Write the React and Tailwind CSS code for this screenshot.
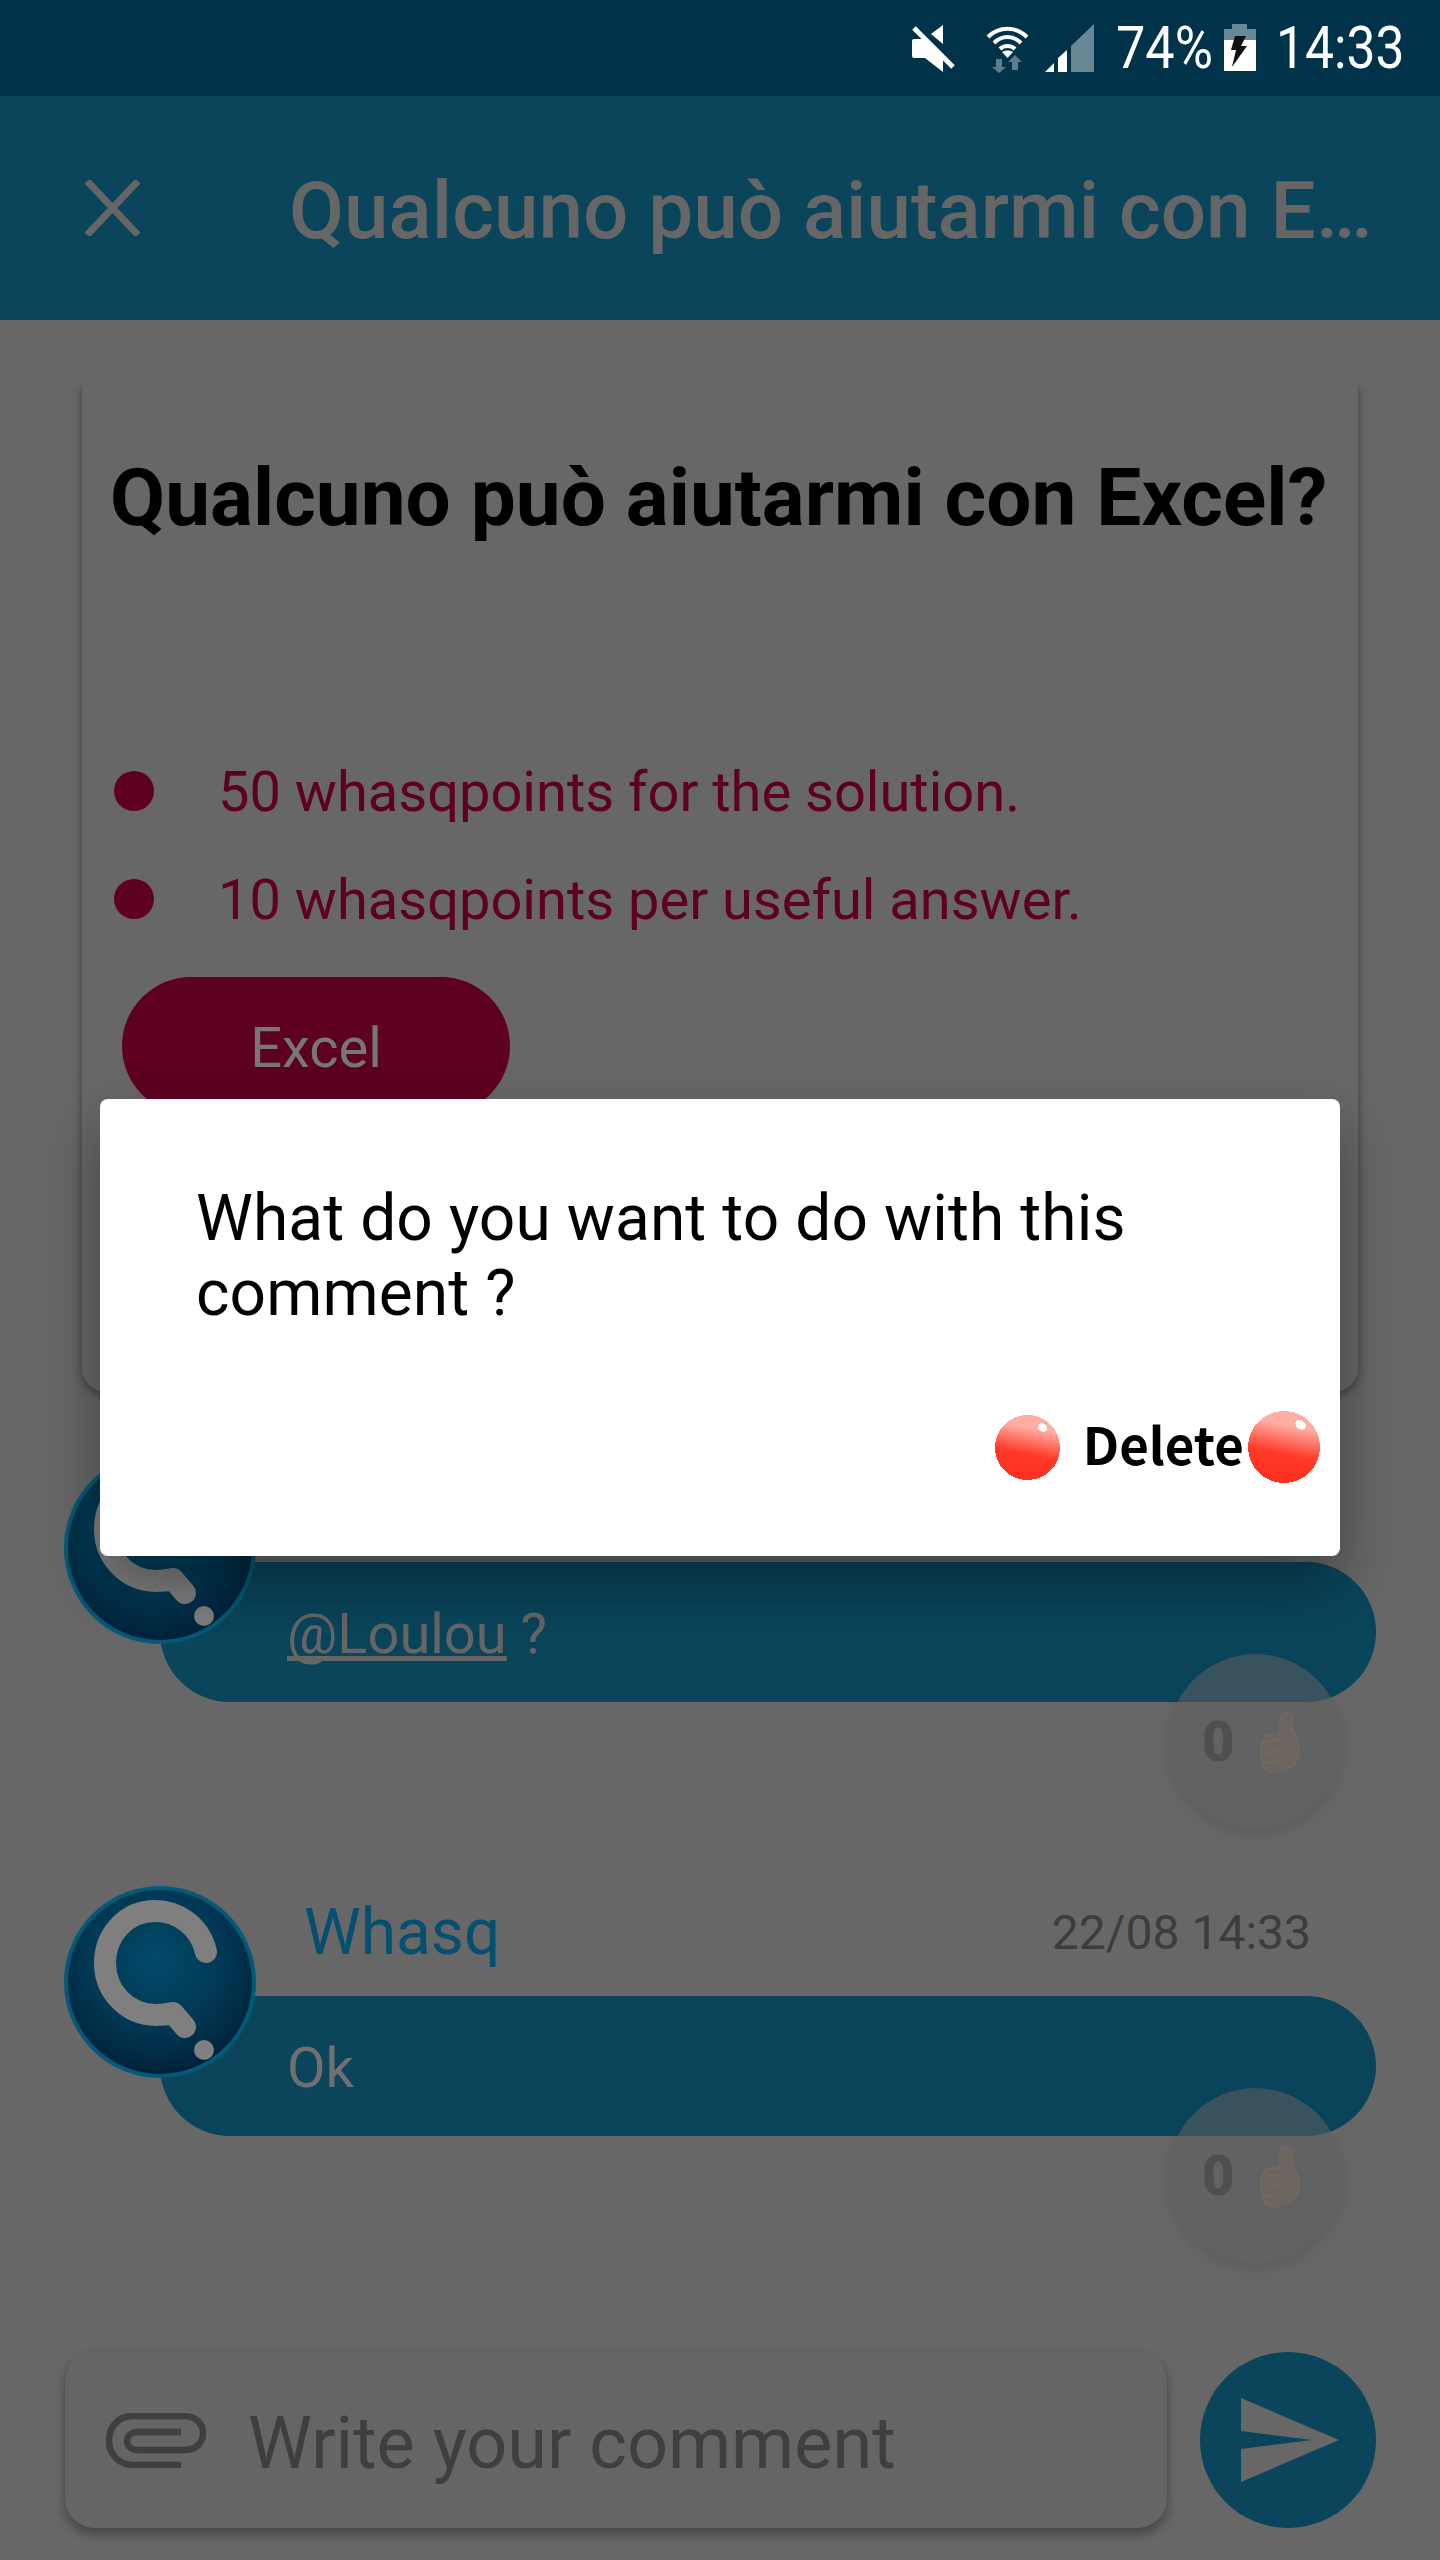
import { useId } from 'react'

function MuteIcon() {
  return (
    <svg width="43" height="47" viewBox="0 0 43 47" className="shrink-0">
      <path d="M19 9 31 0V19Z" fill="#fff" />
      <path d="M2 14H11L31 32V47L13 33H2Q0 33 0 31V16Q0 14 2 14Z" fill="#fff" />
      <path d="M2 3 41 42" stroke="#fff" strokeWidth="5" />
    </svg>
  )
}

function WifiIcon() {
  return (
    <svg width="43" height="49" viewBox="0 0 43 49" className="shrink-0">
      <g fill="none" stroke="#fff" strokeWidth="4">
        <path d="M2 13C13 2 30 2 41 13" />
        <path d="M8 19C16 11 27 11 35 19" />
        <path d="M14 25C18 21 25 21 29 25" />
      </g>
      <path d="M16 28C19 26 24 26 27 28L21.5 34Z" fill="#fff" />
      <path d="M10 35H16V43H20L13 49 6 43H10Z" fill="#5e7d8c" />
      <path d="M26 46H32V38H36L29 31 22 38H26Z" fill="#5e7d8c" />
    </svg>
  )
}

function SignalIcon() {
  return (
    <svg width="49" height="48" viewBox="0 0 49 48" className="shrink-0">
      <path d="M0 48 9 39V48Z" fill="#fff" />
      <path d="M13 48V34L22 26V48Z" fill="#fff" />
      <path d="M26 48V22L49 0V48Z" fill="#688896" />
    </svg>
  )
}

function BatteryIcon() {
  return (
    <svg width="32" height="48" viewBox="0 0 32 48" className="shrink-0">
      <path d="M8 0H23V5H32V16H0V5H8Z" fill="#688896" />
      <path d="M0 16H32V47H0Z" fill="#fff" />
      <path d="M11 12H22L17 22H23L8 43 12 26H7Z" fill="#111" />
    </svg>
  )
}

function StatusBar() {
  return (
    <div className="flex h-24 shrink-0 items-center justify-end bg-[#003349] pr-[38px] text-white">
      <MuteIcon />
      <div className="ml-[31px]"><WifiIcon /></div>
      <div className="ml-4"><SignalIcon /></div>
      <span className="ml-[22px] w-[94px] origin-left scale-x-[0.87] text-[60px] leading-none whitespace-nowrap">74%</span>
      <div className="ml-[14px]"><BatteryIcon /></div>
      <span className="ml-5 w-[126px] origin-left scale-x-[0.86] text-[60px] leading-none whitespace-nowrap">14:33</span>
    </div>
  )
}

function Ball({ size }) {
  const id = useId()
  return (
    <svg width={size} height={size} viewBox="0 0 65 65" shapeRendering="crispEdges" className="shrink-0">
      <defs>
        <linearGradient id={id} x1="0.62" y1="0" x2="0.42" y2="1">
          <stop offset="0.2" stopColor="#ffaea3" />
          <stop offset="0.6" stopColor="#ff3a28" />
          <stop offset="1" stopColor="#ff2f1e" />
        </linearGradient>
      </defs>
      <circle cx="32.5" cy="32.5" r="32.5" fill={`url(#${id})`} />
      <ellipse cx="47.5" cy="12.5" rx="5" ry="4" transform="rotate(35 47.5 12.5)" fill="#fff" />
    </svg>
  )
}

function Avatar() {
  return (
    <svg width="200" height="200" viewBox="0 0 200 200">
      <defs>
        <radialGradient id="avatarFill" cx="0.48" cy="0.38" r="0.68">
          <stop offset="0" stopColor="#014a68" />
          <stop offset="0.5" stopColor="#013a56" />
          <stop offset="1" stopColor="#001c32" />
        </radialGradient>
      </defs>
      <circle cx="100" cy="102" r="94" fill="url(#avatarFill)" stroke="#035a78" strokeWidth="4" />
      <path
        d="M146 72C140 46 118 31 95 31C66 31 45 55 45 83C45 112 68 135 96 135C103 135 109 134 113 133L125 147"
        fill="none"
        stroke="#7f7f7f"
        strokeWidth="22"
        strokeLinecap="round"
        strokeLinejoin="round"
      />
      <circle cx="144" cy="170" r="10" fill="#7f7f7f" />
    </svg>
  )
}

function Thumb() {
  return (
    <svg width="41" height="62" viewBox="-2 -2 124 189" className="shrink-0">
      <path
        d="M60 62C62 45 62 30 62 18C62-4 98-4 98 18L98 52C112 72 120 90 120 112C120 150 100 172 65 178C50 185 30 185 22 175C12 170 8 160 10 150C2 140 0 128 6 118C0 105 4 90 12 84C12 72 22 65 35 66C45 66 52 65 60 62Z"
        fill="#6b655e"
        stroke="#716a62"
        strokeWidth="5"
      />
      <path d="M12 84C25 90 50 88 68 80M6 118C25 125 50 120 72 112M10 150C25 155 50 150 70 142" fill="none" stroke="#716a62" strokeWidth="5" />
    </svg>
  )
}

function Message({ author, time, children }) {
  return (
    <div className="relative h-[434px] shrink-0">
      <div className="absolute left-[60px] top-[-6px] z-10"><Avatar /></div>
      {/* first message's header sits behind the dialog, so it stays an empty row */}
      <div className="mb-4 flex h-[94px] items-center justify-between pl-[304px] pr-[129px]">
        {author && <span className="text-[64px] leading-none text-[#04506e]">{author}</span>}
        {time && <span className="text-[48px] leading-none text-[#3d3d3d]">{time}</span>}
      </div>
      <div className="ml-40 flex h-[140px] w-[1216px] items-center rounded-[70px] bg-[#0a455b] pl-[127px] pt-1 text-[56px] leading-none">
        {children}
      </div>
      <div className="absolute left-[1168px] top-[202px] z-10 flex h-[175px] w-[175px] items-center rounded-full bg-[#5f5f5f]/55 pl-[34px] shadow-[0_6px_14px_rgba(0,0,0,0.1)]">
        <span className="text-[56px] font-black leading-none text-[#4f4f4f]">0</span>
        <div className="ml-[25px] translate-y-[1px]"><Thumb /></div>
      </div>
    </div>
  )
}

function PointsRow({ children, className }) {
  return (
    <div className={`flex items-center ${className}`}>
      <div className="ml-1 h-10 w-10 shrink-0 -translate-y-[1px] rounded-full bg-[#5e0021]" />
      <span className="ml-[64px] text-[56px] leading-[66px] text-[#5e0021]">{children}</span>
    </div>
  )
}

export default function App() {
  return (
    <div className="relative flex h-[2560px] w-[1440px] flex-col overflow-hidden bg-[#676767] [font-family:Roboto,sans-serif]">
      <StatusBar />

      <div className="flex h-[224px] shrink-0 items-center bg-[#0a455b] pl-[85px]">
        <svg width="55" height="56" viewBox="0 0 55 56" className="shrink-0">
          <path d="M2 1 53 55M53 1 2 55" stroke="#666" strokeWidth="7" />
        </svg>
        <h1 className="ml-[149px] whitespace-nowrap pt-[6px] text-[80px] font-medium leading-none text-[#666]">
          Qualcuno può aiutarmi con E…
        </h1>
      </div>

      <div className="mt-16 min-h-0 flex-1 overflow-hidden">
        <div className="ml-[82px] flex h-[1008px] w-[1276px] flex-col rounded-b-[24px] bg-[#676767] pl-[28px] shadow-[0_3px_10px_rgba(0,0,0,0.4)]">
          <h2 className="mt-[74px] whitespace-nowrap text-[80px] font-bold leading-none tracking-[0.05px] text-black">
            Qualcuno può aiutarmi con Excel?
          </h2>
          <PointsRow className="mt-[221px]">50 whasqpoints for the solution.</PointsRow>
          <PointsRow className="mt-[42px]">10 whasqpoints per useful answer.</PointsRow>
          <div className="ml-3 mt-[44px] flex h-[138px] w-[388px] items-center justify-center rounded-[69px] bg-[#5e0021] pt-1 text-[56px] leading-none text-[#777]">
            Excel
          </div>
        </div>

        <div className="mt-[60px]">
          <Message>
            <span className="text-[#666]"><span className="underline [text-decoration-skip-ink:none]">@Loulou</span> ?</span>
          </Message>
          <Message author="Whasq" time="22/08 14:33">
            <span className="text-[#707070]">Ok</span>
          </Message>
        </div>
      </div>

      <div className="flex shrink-0 pb-8 pl-[65px]">
        <div className="flex h-[176px] w-[1102px] items-center rounded-[30px] bg-[#656565] pl-[41px] shadow-[0_6px_12px_rgba(0,0,0,0.35)]">
          <svg width="100" height="55" viewBox="0 0 100 55" className="shrink-0">
            <path
              d="M75 52H27C12 52 3 40 3 27.5C3 14 12 3 27 3H78C90 3 97 11 97 20C97 30 90 37 78 37H32C24 37 21 32 21 28C21 23 25 19 32 19H75"
              fill="none"
              stroke="#3f3f3f"
              strokeWidth="6.5"
            />
          </svg>
          <span className="ml-[42px] pt-2 text-[72px] leading-none text-[#3f3f3f]">Write your comment</span>
        </div>
        <div className="ml-[33px] h-[176px] w-[176px] rounded-full bg-[#0a455b]">
          <svg width="176" height="176" viewBox="0 0 176 176">
            <path d="M41 46 139 88 41 130V97L112 88 41 79Z" fill="#676767" />
          </svg>
        </div>
      </div>

      <div className="absolute left-[100px] top-[1099px] z-20 flex h-[457px] w-[1240px] flex-col rounded-[8px] bg-white pl-[96px] pr-5 shadow-[0_30px_60px_rgba(0,0,0,0.35)]">
        <p className="mt-[82px] text-[64px] leading-[75px] tracking-[0.1px] text-black">What do you want to do with this comment ?</p>
        <div className="mt-[80px] flex items-center justify-end">
          <Ball size={65} />
          <span className="ml-[23px] pb-2 [font-family:'Noto_Sans_CJK_SC',sans-serif] text-[51px] font-bold leading-none text-black">Delete</span>
          <div className="ml-[4px]"><Ball size={72} /></div>
        </div>
      </div>
    </div>
  )
}
